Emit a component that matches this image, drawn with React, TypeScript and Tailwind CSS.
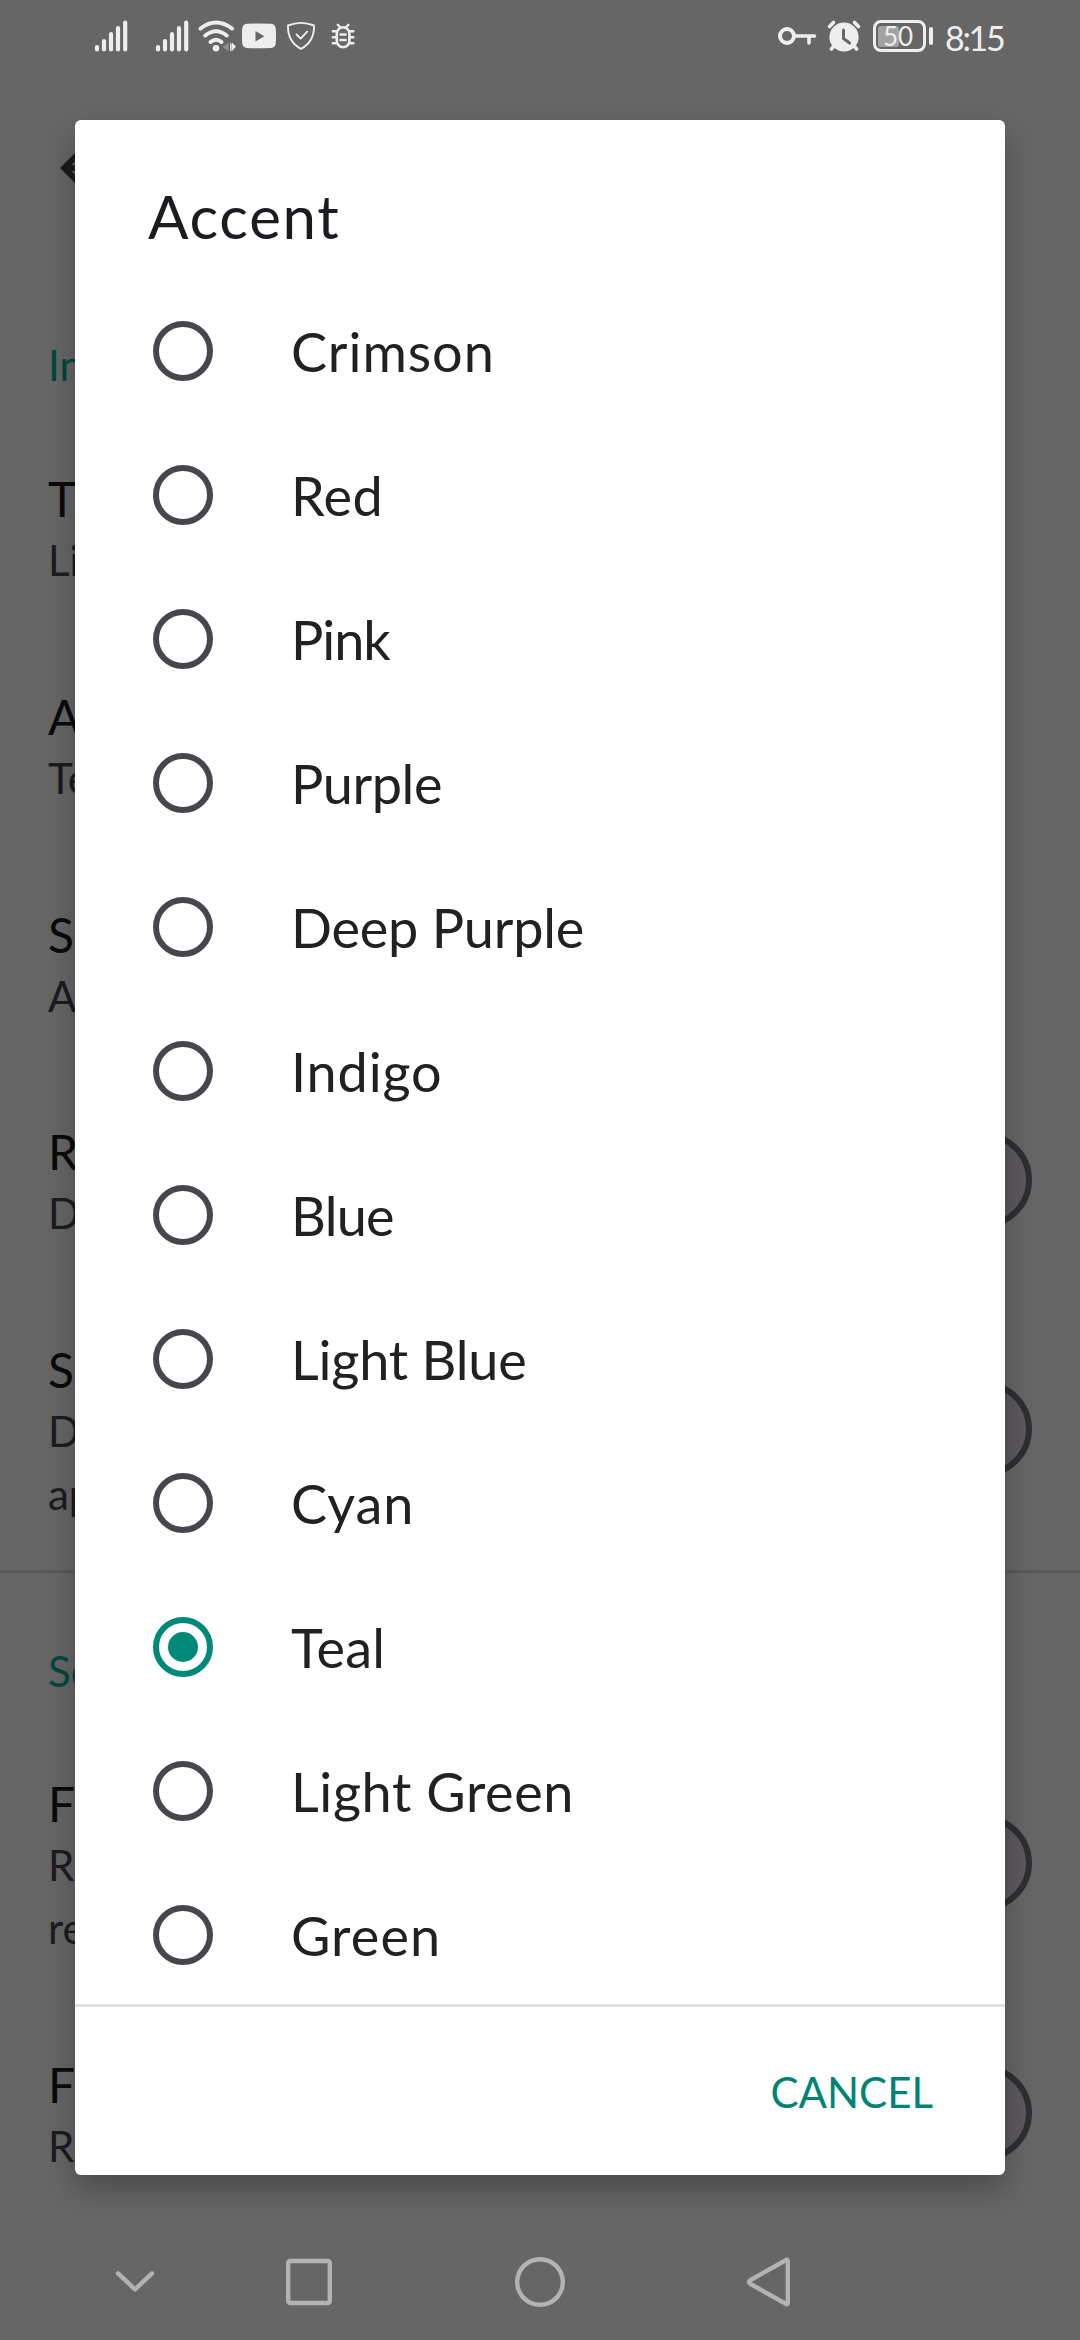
const OPTIONS = [
  { label: "Crimson", spacing: "tracking-[0.95px]" },
  { label: "Red", spacing: "tracking-[0.4px]" },
  { label: "Pink", spacing: "tracking-[-1px]" },
  { label: "Purple", spacing: "tracking-[-0.4px]" },
  { label: "Deep Purple", spacing: "tracking-[-0.2px]" },
  { label: "Indigo", spacing: "tracking-[0.85px]" },
  { label: "Blue", spacing: "tracking-[-0.7px]" },
  { label: "Light Blue", spacing: "tracking-[-0.2px]" },
  { label: "Cyan", spacing: "tracking-[1px]" },
  { label: "Teal", spacing: "tracking-[0.2px]" },
  { label: "Light Green", spacing: "tracking-[0.6px]" },
  { label: "Green", spacing: "tracking-[1.1px]" },
];

function StatusBar() {
  return (
    <header className="flex h-[75px] items-start justify-between pl-[90px] pr-[76px] text-[#eeeeee]">
      <svg width="270" height="75" viewBox="90 0 270 75" fill="none" stroke="currentColor" strokeLinecap="round" strokeLinejoin="round">
        <g strokeWidth="4.2">
          <path d="M97 47v2.4M104 41v8.4M111 34.2v15.2M118 28v21.4M125.2 22.5v26.9" />
          <path d="M158 47v2.4M165 41v8.4M172 34.2v15.2M179 28v21.4M186.2 22.5v26.9" />
        </g>
        <path d="M200.5 28.5Q216 16.5 232 28.5" strokeWidth="4" />
        <path d="M205.3 35.5Q216 27 226.7 35.5" strokeWidth="4" />
        <path d="M210.5 42Q216 37.500 221.5 42" strokeWidth="4" />
        <circle cx="216" cy="48.3" r="3.3" fill="currentColor" stroke="none" />
        <path d="M228.600 42.500v9l-6-4.500z" fill="#8e8e8e" stroke="none" />
        <path d="M230.200 42.500v9l1.500-1V44zM232 42.500v8.500l4-4.500z" fill="currentColor" stroke="none" />
        <path d="M247 23.800Q259 23.200 271 23.800Q275.500 24 275.800 29Q276.200 36 275.800 43Q275.500 47.700 271 48Q259 48.600 247 48Q242.500 47.700 242.200 43Q241.800 36 242.200 29Q242.500 24 247 23.800Z" fill="currentColor" stroke="none" />
        <path d="M255.500 31v10.400l8.800-5.200z" fill="#666666" stroke="none" />
        <path d="M288 25.500Q301 20.300 314 25.500C314.400 37 310 44 301 48.900C292 44 287.600 37 288 25.500Z" strokeWidth="1.900" />
        <path d="M296.500 34.500l4.200 4.200 6.500-7" strokeWidth="1.900" />
        <path d="M336.800 33.500a6.300 6.300 0 0 1 12.600 0v7.500a6.300 6.300 0 0 1-12.600 0zM340.500 34.500h5M340.500 40h5" strokeWidth="2.600" />
        <path d="M337.800 24.800l3 3.200M348.400 24.800l-3 3.200M332.800 31.200h3M350.400 31.200h3M332.800 37.200h3M350.400 37.200h3M332.800 43.300h3M350.400 43.300h3" strokeWidth="2.400" />
      </svg>
      <div className="flex h-[75px] items-start">
        <svg width="94" height="75" viewBox="776 0 94 75" fill="none" stroke="currentColor" strokeLinecap="round">
          <circle cx="787" cy="36" r="7" strokeWidth="4" />
          <path d="M795 36h19.500M809 37v6" strokeWidth="3.600" />
          <circle cx="844" cy="37" r="14.600" fill="currentColor" stroke="none" />
          <path d="M829.500 26.500l4-4M858.500 26.500l-4-4M834 46l-2.600 3M854 46l2.600 3" strokeWidth="3.600" />
          <path d="M843.500 30v8.500l6 4.500" stroke="#666666" strokeWidth="3" />
        </svg>
        <div className="mt-5 ml-[3px] flex items-center gap-[3px]">
          <div className="flex h-[32px] w-[53px] items-center rounded-[8px] border-[3px] border-[#eeeeee] pl-[2px]">
            <div className="flex h-[21px] w-[21px] items-center rounded-[3px] bg-[#a2a2a2] pl-[5px] text-[26px] leading-none whitespace-nowrap">50</div>
          </div>
          <div className="h-[18px] w-[4px] rounded-full bg-[#eeeeee]" />
        </div>
        <div className="mt-[18px] ml-[12px] w-[59px] text-[34px] leading-[40px] tracking-[-2.3px] whitespace-nowrap">8:15</div>
      </div>
    </header>
  );
}

function Switch({ offset }: { offset: string }) {
  return <div className={`h-[96px] w-[156px] shrink-0 rounded-full border-[6px] border-[#302e33] bg-[#5c595f] ${offset}`} />;
}

type SettingProps = { title: string; summary: string; height: string; textOffset: string; toggle?: boolean; toggleOffset?: string };

function Setting({ title, summary, height, textOffset, toggle, toggleOffset = "mb-0" }: SettingProps) {
  return (
    <div className={`flex items-center justify-between pr-12 pl-12 ${height}`}>
      <div className={textOffset}>
        <div className="text-[48px] leading-[60px] text-[#0a0a0a]">{title}</div>
        <div className="text-[42px] leading-[63px] whitespace-pre-line text-[#1c1b1f]">{summary}</div>
      </div>
      {toggle && <Switch offset={toggleOffset} />}
    </div>
  );
}

function Settings() {
  return (
    <main className="h-[2125px] overflow-hidden">
      <div className="flex h-[186px] items-center pl-12">
        <svg className="h-[72px] w-[72px]" viewBox="0 0 24 24" fill="#1c1b1f">
          <path d="M20 11H7.830l5.590-5.590L12 4l-8 8 8 8 1.410-1.410L7.830 13H20z" />
        </svg>
      </div>
      <div className="flex h-[168px] items-end pb-[32px] pl-12 text-[42px] leading-[63px] text-[#00483f]">In</div>
      <Setting title="T" summary="Li" height="h-[202px]" textOffset="mt-0" />
      <Setting title="A" summary="Te" height="h-[234px]" textOffset="mt-0" />
      <Setting title="S" summary="A" height="h-[202px]" textOffset="mt-0" />
      <Setting title="R" summary="D" height="h-[226px]" textOffset="mt-[7px]" toggle />
      <Setting title="S" summary={"D\nap"} height="h-[277px]" textOffset="mt-[3px]" toggle toggleOffset="mb-[5px]" />
      <div className="h-[3px] bg-[#5b5b5b]" />
      <div className="flex h-[151px] items-end pb-[21px] pl-12 text-[42px] leading-[63px] text-[#00483f]">Se</div>
      <Setting title="F" summary={"R\nre"} height="h-[277px]" textOffset="mt-[9px]" toggle />
      <Setting title="F" summary="R" height="h-[226px]" textOffset="mt-[5px]" toggle toggleOffset="mb-[2px]" />
    </main>
  );
}

function NavBar() {
  return (
    <nav className="h-[140px]">
      <svg width="1080" height="140" viewBox="0 2200 1080 140" fill="none" stroke="#b3b3b3" strokeWidth="4.400" strokeLinecap="round" strokeLinejoin="round">
        <path d="M118 2273.300l17 16 17-16" />
        <rect x="288.200" y="2261" width="41.600" height="42" rx="2" />
        <circle cx="540" cy="2282" r="22.800" />
        <path d="M787.800 2261.500Q787.800 2258.500 785.300 2260.500L750.500 2280Q747.500 2282 750.500 2284L785.300 2303.500Q787.800 2305.500 787.800 2302.500Z" />
      </svg>
    </nav>
  );
}

function Radio({ selected }: { selected: boolean }) {
  return (
    <span className={`flex h-[60px] w-[60px] shrink-0 items-center justify-center rounded-full border-[6px] ${selected ? "border-[#008879]" : "border-[#49454f]"}`}>
      {selected && <span className="h-[30px] w-[30px] rounded-full bg-[#008879]" />}
    </span>
  );
}

function AccentDialog() {
  return (
    <section className="absolute top-[120px] left-[75px] flex h-[2055px] w-[930px] flex-col rounded-[6px] bg-white shadow-[0_14px_32px_rgba(0,0,0,0.28)]">
      <h1 className="h-[159px] pt-[60px] pl-[73px] text-[60px] leading-[72px] tracking-[1.7px] text-[#1c1b1f]">Accent</h1>
      <ul className="flex h-[1725px] flex-col">
        {OPTIONS.map(({ label, spacing }) => (
          <li key={label} className="flex h-[144px] shrink-0 items-center gap-[78px] pl-[78px] text-[#212121]">
            <Radio selected={label === "Teal"} />
            <span className={`pt-[2px] text-[54px] leading-[72px] whitespace-nowrap ${spacing}`}>{label}</span>
          </li>
        ))}
      </ul>
      <footer className="flex flex-1 items-center justify-end border-t-[3px] border-[#e0e0e0] pt-[2px] pr-[72px] text-[42px] text-[#008375]">
        CANCEL
      </footer>
    </section>
  );
}

export default function App() {
  return (
    <div className="relative h-[2340px] w-[1080px] overflow-hidden bg-[#666666] font-['Lato',sans-serif]">
      <StatusBar />
      <Settings />
      <NavBar />
      <AccentDialog />
    </div>
  );
}
